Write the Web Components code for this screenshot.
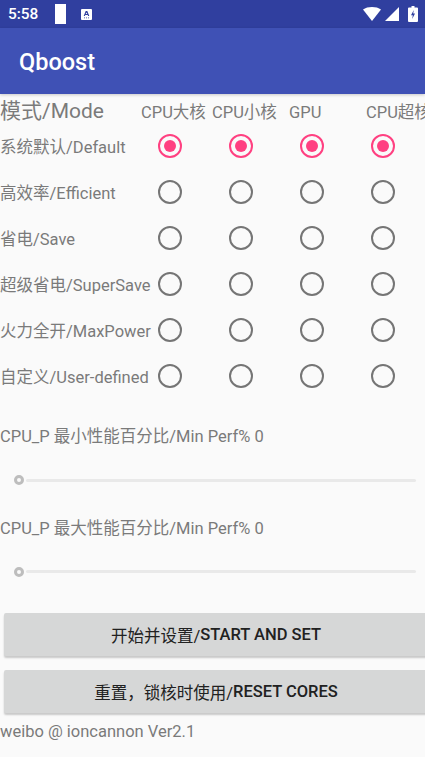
<!DOCTYPE html>
<html>
<head>
<meta charset="utf-8">
<style>
  html, body { margin: 0; height: 757px; overflow: hidden; background: #fafafa; }
  body {
    font-family: Roboto, "Noto Sans CJK SC", sans-serif;
    color: #7a7a7a;
    width: 425px;
  }
  .footer { font-size: 16.5px; line-height: 20px; margin-top: 8.5px; }
</style>
</head>
<body>
<status-bar time="5:58"></status-bar>
<app-bar>Qboost</app-bar>
<mode-table></mode-table>
<perf-slider style="margin-top: 28px">CPU_P 最小性能百分比/Min Perf% 0</perf-slider>
<perf-slider style="margin-top: 28.6px">CPU_P 最大性能百分比/Min Perf% 0</perf-slider>
<action-button style="margin-top: 31.4px"><span>开始并设置/</span>START AND SET</action-button>
<action-button style="margin-top: 13.5px"><span>重置，锁核时使用/</span>RESET CORES</action-button>
<div class="footer">weibo @ ioncannon Ver2.1</div>

<script>
class StatusBar extends HTMLElement {
  constructor() {
    super();
    this.attachShadow({ mode: "open" });
  }

  connectedCallback() {
    this.shadowRoot.innerHTML = `
      <style>
        :host { display: flex; align-items: center; height: 28px; background: #303f9f; color: #fff; font-size: 15.4px; font-weight: 500; padding: 0 7px 0 8px; }
        .time { width: 47px; }
        .block { width: 11px; height: 20px; background: #fff; }
        .note { margin-left: 15px; }
        .right { margin-left: auto; display: flex; align-items: center; }
        svg { display: block; }
      </style>
      <span class="time">${this.getAttribute("time")}</span>
      <span class="block"></span>
      <svg class="note" width="11" height="11" viewBox="0 0 11 11">
        <path fill="#fff" d="M1 0h9a1 1 0 0 1 1 1v9a1 1 0 0 1-1 1H1a1 1 0 0 1-1-1V1a1 1 0 0 1 1-1z"/>
        <path fill="#303f9f" d="M4.7 2h1.6l2 5H7.1l-.4-1H4.3l-.4 1H2.7zM5.5 3.4 4.7 5h1.6zM3 8.4h1v.8H3zM5 8.4h1v.8H5zM7 8.4h1v.8H7z"/>
      </svg>
      <div class="right">
        <svg width="18" height="14" viewBox="0 0 18 14"><path fill="#fff" d="M0 2.500C2.400.8 5.500 0 9 0s6.600.8 9 2.500L9 14z"/></svg>
        <svg style="margin-left:4px" width="14" height="14" viewBox="0 0 14 14"><path fill="#fff" d="M14 0v14H0z"/></svg>
        <svg style="margin-left:9px" width="10" height="16" viewBox="0 0 10 16"><path fill="#fff" d="M3.500 0h3v1.500h2.500a1 1 0 0 1 1 1V15a1 1 0 0 1-1 1H1a1 1 0 0 1-1-1V2.500a1 1 0 0 1 1-1h2.500z"/><path fill="#303f9f" d="M5.800 4 3 9.200h1.800L4.200 13 7 7.600H5.200z"/></svg>
      </div>
    `;
  }
}

class AppBar extends HTMLElement {
  constructor() {
    super();
    this.attachShadow({ mode: "open" });
    this.shadowRoot.innerHTML = `
      <style>
        :host { display: flex; align-items: center; height: 66px; padding: 2px 0 0 19px; box-sizing: border-box; background: #3f51b5; color: #fff; font-size: 23.5px; font-weight: 500; box-shadow: 0 1px 3px rgba(0,0,0,.2); position: relative; }
      </style>
      <slot></slot>
    `;
  }
}

class RadioDot extends HTMLElement {
  constructor() {
    super();
    this.attachShadow({ mode: "open" });
    this.shadowRoot.innerHTML = `
      <style>
        :host { display: flex; justify-content: center; align-items: center; }
        .ring { width: 24px; height: 24px; box-sizing: border-box; border: 2px solid #757575; border-radius: 50%; display: grid; place-items: center; }
        :host([checked]) .ring { border-color: #ff4081; }
        :host([checked]) .ring::after { content: ""; width: 12px; height: 12px; border-radius: 50%; background: #ff4081; }
      </style>
      <div class="ring"></div>
    `;
  }
}

class ModeTable extends HTMLElement {
  static modes = ["系统默认/Default", "高效率/Efficient", "省电/Save", "超级省电/SuperSave", "火力全开/MaxPower", "自定义/User-defined"];

  constructor() {
    super();
    this.attachShadow({ mode: "open" });
    const rows = ModeTable.modes.map((name, i) => `
      <div class="label">${name}</div>
      ${"x".repeat(4).split("").map(() => `<radio-dot ${i === 0 ? "checked" : ""}></radio-dot>`).join("")}
    `).join("");
    this.shadowRoot.innerHTML = `
      <style>
        :host { display: block; overflow: hidden; }
        .head { display: flex; height: 29px; align-items: baseline; font-size: 16.5px; white-space: nowrap; }
        .head span { flex: none; }
        .title { font-size: 21px; width: 141px; }
        .head span:nth-child(2), .head span:nth-child(3) { width: 71px; }
        .head span:nth-child(4) { margin-left: 6px; width: 77px; }
        .grid { display: grid; grid-template-columns: 134.500px repeat(4, 71px); grid-auto-rows: 46px; align-items: center; }
        .grid radio-dot { height: 46px; }
        .label { font-size: 16.5px; white-space: nowrap; }
      </style>
      <div class="head">
        <span class="title">模式/Mode</span>
        <span>CPU大核</span><span>CPU小核</span><span>GPU</span><span>CPU超核</span>
      </div>
      <div class="grid">${rows}</div>
    `;
  }
}

class PerfSlider extends HTMLElement {
  constructor() {
    super();
    this.attachShadow({ mode: "open" });
    this.shadowRoot.innerHTML = `
      <style>
        :host { display: block; font-size: 16.5px; }
        .text { line-height: 20px; }
        .bar { display: flex; align-items: center; height: 20px; margin-top: 23px; padding-left: 14px; }
        .thumb { width: 10px; height: 10px; box-sizing: border-box; border: 3px solid #bdbdbd; border-radius: 50%; }
        .track { width: 390px; height: 3px; margin-left: 2px; background: #e9e9e9; border-radius: 2px; }
      </style>
      <div class="text"><slot></slot></div>
      <div class="bar"><div class="thumb"></div><div class="track"></div></div>
    `;
  }
}

class ActionButton extends HTMLElement {
  constructor() {
    super();
    this.attachShadow({ mode: "open" });
    this.shadowRoot.innerHTML = `
      <style>
        :host { display: flex; justify-content: center; align-items: center; height: 43.5px; width: 424px; padding-right: 1px; margin-left: 4px; background: #d6d7d7; color: #212121; font-size: 16.5px; font-weight: 500; border-radius: 2px; box-shadow: 0 2px 2px rgba(0,0,0,.2); }
        ::slotted(span) { font-weight: 400; }
      </style>
      <slot></slot>
    `;
  }
}

customElements.define("status-bar", StatusBar);
customElements.define("app-bar", AppBar);
customElements.define("radio-dot", RadioDot);
customElements.define("mode-table", ModeTable);
customElements.define("perf-slider", PerfSlider);
customElements.define("action-button", ActionButton);
</script>
</body>
</html>
